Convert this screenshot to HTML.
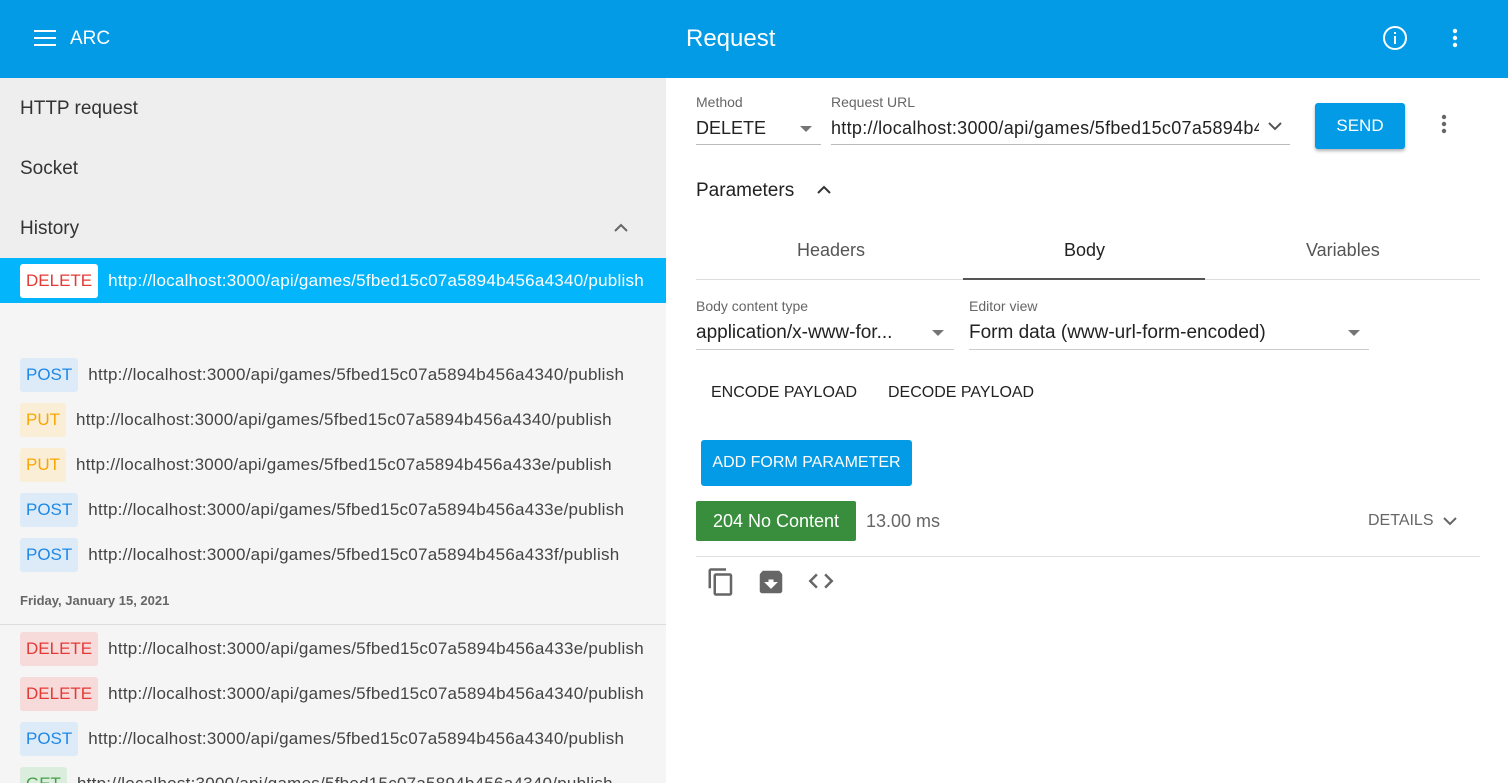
<!DOCTYPE html>
<html><head><meta charset="utf-8"><style>
*{box-sizing:border-box;margin:0;padding:0}
body{width:1508px;height:783px;overflow:hidden;font-family:"Liberation Sans",sans-serif;background:#fff;position:relative;color:#212121}
.hdr{position:absolute;left:0;top:0;width:1508px;height:78px;background:#039be5;color:#fff}
.left{position:absolute;left:0;top:78px;width:666px;height:705px;background:#f5f5f5;overflow:hidden}
.nav{position:absolute;left:0;top:0;width:666px;height:180px;background:#eeeeee}
.nav div{position:absolute;left:20px;font-size:19px;color:#333}
.row{position:absolute;left:0;width:666px;height:45px;display:flex;align-items:center;padding-left:20px;font-size:17px;color:#444;white-space:nowrap}
.b{height:34px;line-height:34px;padding:0 6px;border-radius:3px;font-size:17px;margin-right:10px;flex:none}
.del{background:#f7dada;color:#e53935}
.post{background:#dcebf7;color:#1e88e5}
.put{background:#fbeed7;color:#f9a602}
.get{background:#dbeedd;color:#43a047}
.u{overflow:hidden;text-overflow:ellipsis;flex:1;margin-right:20px;letter-spacing:0.25px}
.lbl{position:absolute;font-size:14px;color:#666}
.val{position:absolute;font-size:19px;color:#222}
.line{position:absolute;height:1px;background:#ccc}
.caret{position:absolute;width:0;height:0;border-left:6px solid transparent;border-right:6px solid transparent;border-top:6px solid #757575}
</style></head><body>
<div class="hdr">
 <svg style="position:absolute;left:34px;top:29px" width="22" height="18"><rect y="1" width="22" height="2" fill="#fff"/><rect y="8" width="22" height="2" fill="#fff"/><rect y="15" width="22" height="2" fill="#fff"/></svg>
 <div style="position:absolute;left:70px;top:28px;font-size:19px">ARC</div>
 <div style="position:absolute;left:686px;top:25px;font-size:24px">Request</div>
 <svg style="position:absolute;left:1382px;top:25px" width="26" height="26"><circle cx="13" cy="13" r="11" fill="none" stroke="#fff" stroke-width="2"/><rect x="12" y="11" width="2" height="8" fill="#fff"/><rect x="12" y="7" width="2" height="2" fill="#fff"/></svg>
 <svg style="position:absolute;left:1451px;top:28px" width="8" height="22"><circle cx="4" cy="3" r="2.2" fill="#fff"/><circle cx="4" cy="10" r="2.2" fill="#fff"/><circle cx="4" cy="17" r="2.2" fill="#fff"/></svg>
</div>
<div class="left">
 <div class="nav">
  <div style="top:20px">HTTP request</div>
  <div style="top:80px">Socket</div>
  <div style="top:140px">History</div>
  <svg style="position:absolute;left:613px;top:145px" width="16" height="10"><path d="M2 8 L8 2 L14 8" fill="none" stroke="#666" stroke-width="2"/></svg>
 </div>
 <div class="row" style="top:180px;height:45px;background:#03b5fa;color:#fff"><span class="b" style="background:#fff;color:#e53935">DELETE</span><span class="u">http://localhost:3000/api/games/5fbed15c07a5894b456a4340/publish</span></div>
 <div class="row" style="top:274px"><span class="b post">POST</span><span class="u">http://localhost:3000/api/games/5fbed15c07a5894b456a4340/publish</span></div>
 <div class="row" style="top:319px"><span class="b put">PUT</span><span class="u">http://localhost:3000/api/games/5fbed15c07a5894b456a4340/publish</span></div>
 <div class="row" style="top:364px"><span class="b put">PUT</span><span class="u">http://localhost:3000/api/games/5fbed15c07a5894b456a433e/publish</span></div>
 <div class="row" style="top:409px"><span class="b post">POST</span><span class="u">http://localhost:3000/api/games/5fbed15c07a5894b456a433e/publish</span></div>
 <div class="row" style="top:454px"><span class="b post">POST</span><span class="u">http://localhost:3000/api/games/5fbed15c07a5894b456a433f/publish</span></div>
 <div style="position:absolute;left:20px;top:515px;font-size:13px;font-weight:bold;color:#666">Friday, January 15, 2021</div>
 <div style="position:absolute;left:0;top:546px;width:666px;height:1px;background:#ddd"></div>
 <div class="row" style="top:548px"><span class="b del">DELETE</span><span class="u">http://localhost:3000/api/games/5fbed15c07a5894b456a433e/publish</span></div>
 <div class="row" style="top:593px"><span class="b del">DELETE</span><span class="u">http://localhost:3000/api/games/5fbed15c07a5894b456a4340/publish</span></div>
 <div class="row" style="top:638px"><span class="b post">POST</span><span class="u">http://localhost:3000/api/games/5fbed15c07a5894b456a4340/publish</span></div>
 <div class="row" style="top:683px"><span class="b get">GET</span><span class="u">http://localhost:3000/api/games/5fbed15c07a5894b456a4340/publish</span></div>
</div>

<div class="lbl" style="left:696px;top:94px">Method</div>
<div class="val" style="left:696px;top:118px;font-size:18px">DELETE</div>
<div class="caret" style="left:800px;top:126px"></div>
<div class="line" style="left:696px;top:144px;width:125px;background:#bbb"></div>
<div class="lbl" style="left:831px;top:94px">Request URL</div>
<div class="val" style="left:831px;top:118px;font-size:18px;width:428px;overflow:hidden;white-space:nowrap;letter-spacing:0.3px">http://localhost:3000/api/games/5fbed15c07a5894b456a4340/publish</div>
<svg style="position:absolute;left:1267px;top:121px" width="16" height="10"><path d="M2 2 L8 8 L14 2" fill="none" stroke="#555" stroke-width="2"/></svg>
<div class="line" style="left:831px;top:144px;width:459px;background:#bbb"></div>
<div style="position:absolute;left:1315px;top:103px;width:90px;height:46px;background:#039be5;color:#fff;border-radius:3px;font-size:17px;text-align:center;line-height:46px;box-shadow:0 2px 3px rgba(0,0,0,.3)">SEND</div>
<svg style="position:absolute;left:1440px;top:114px" width="8" height="22"><circle cx="4" cy="3" r="2.2" fill="#666"/><circle cx="4" cy="10" r="2.2" fill="#666"/><circle cx="4" cy="17" r="2.2" fill="#666"/></svg>

<div class="val" style="left:696px;top:180px">Parameters</div>
<svg style="position:absolute;left:816px;top:185px" width="16" height="10"><path d="M2 8 L8 2 L14 8" fill="none" stroke="#333" stroke-width="2"/></svg>

<div class="val" style="left:797px;top:240px;font-size:18px;color:#555">Headers</div>
<div class="val" style="left:1064px;top:240px;font-size:18px">Body</div>
<div class="val" style="left:1306px;top:240px;font-size:18px;color:#555">Variables</div>
<div class="line" style="left:696px;top:279px;width:784px;background:#ddd"></div>
<div style="position:absolute;left:963px;top:278px;width:242px;height:2px;background:#555"></div>

<div class="lbl" style="left:696px;top:298px">Body content type</div>
<div class="val" style="left:696px;top:322px;font-size:19px">application/x-www-for...</div>
<div class="caret" style="left:932px;top:330px"></div>
<div class="line" style="left:696px;top:349px;width:258px"></div>
<div class="lbl" style="left:969px;top:298px">Editor view</div>
<div class="val" style="left:969px;top:322px;font-size:19px">Form data (www-url-form-encoded)</div>
<div class="caret" style="left:1348px;top:330px"></div>
<div class="line" style="left:969px;top:349px;width:400px"></div>

<div class="val" style="left:711px;top:384px;font-size:16px">ENCODE PAYLOAD</div>
<div class="val" style="left:888px;top:384px;font-size:16px">DECODE PAYLOAD</div>
<div style="position:absolute;left:701px;top:440px;width:211px;height:46px;background:#039be5;color:#fff;border-radius:3px;font-size:16px;text-align:center;line-height:46px">ADD FORM PARAMETER</div>

<div style="position:absolute;left:696px;top:501px;width:160px;height:40px;background:#388e3c;color:#fff;border-radius:2px;font-size:18px;text-align:center;line-height:40px">204 No Content</div>
<div class="val" style="left:866px;top:511px;font-size:18px;color:#666">13.00 ms</div>
<div class="val" style="left:1368px;top:512px;font-size:16px;color:#666">DETAILS</div>
<svg style="position:absolute;left:1442px;top:516px" width="16" height="10"><path d="M2 2 L8 8 L14 2" fill="none" stroke="#666" stroke-width="2"/></svg>
<div class="line" style="left:696px;top:556px;width:784px;background:#e0e0e0"></div>
<svg style="position:absolute;left:706px;top:567px" width="30" height="30" viewBox="0 0 24 24"><path d="M16 1H4c-1.1 0-2 .9-2 2v14h2V3h12V1zm3 4H8c-1.1 0-2 .9-2 2v14c0 1.1.9 2 2 2h11c1.1 0 2-.9 2-2V7c0-1.1-.9-2-2-2zm0 16H8V7h11v14z" fill="#666"/></svg>
<svg style="position:absolute;left:756px;top:567px" width="30" height="30" viewBox="0 0 24 24"><path d="M20.54 5.23l-1.39-1.68C18.880 3.21 18.47 3 18 3H6c-.47 0-.88.21-1.16.55L3.46 5.23C3.17 5.570 3 6.02 3 6.5V19c0 1.1.9 2 2 2h14c1.1 0 2-.9 2-2V6.5c0-.48-.17-.93-.46-1.27zM12 17.5L6.5 12H10v-2h4v2h3.5L12 17.5z" fill="#666"/></svg>
<svg style="position:absolute;left:806px;top:566px" width="30" height="30" viewBox="0 0 24 24"><path d="M9.4 16.6L4.8 12l4.6-4.6L8 6l-6 6 6 6 1.4-1.4zm5.2 0l4.6-4.6-4.6-4.6L16 6l6 6-6 6-1.4-1.4z" fill="#666"/></svg>
</body></html>
